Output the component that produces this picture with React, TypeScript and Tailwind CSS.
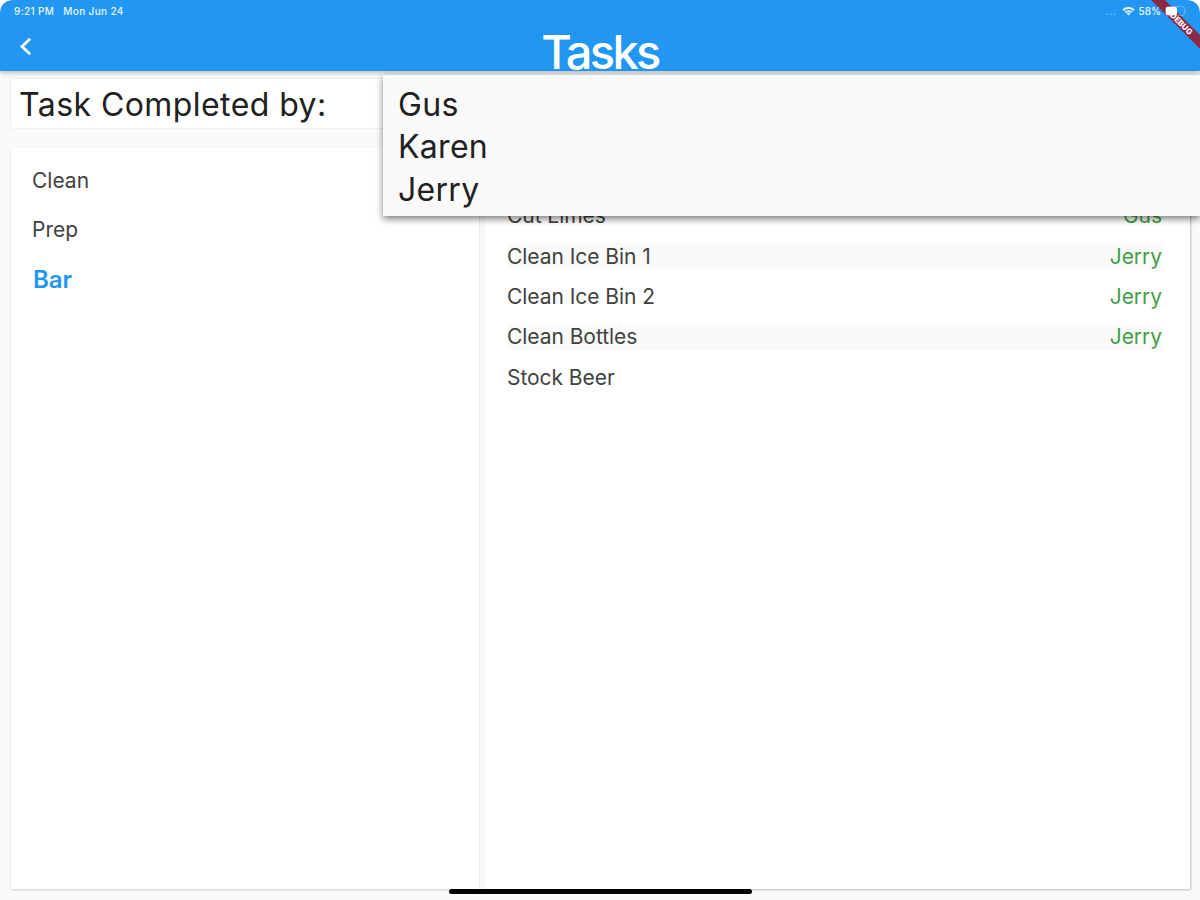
interface Task {
  name: string;
  completedBy?: string;
}

const employees = ['Gus', 'Karen', 'Jerry'];

const categories = ['Clean', 'Prep', 'Bar'];

const tasks: Task[] = [
  { name: 'Cut Limes', completedBy: 'Gus' },
  { name: 'Clean Ice Bin 1', completedBy: 'Jerry' },
  { name: 'Clean Ice Bin 2', completedBy: 'Jerry' },
  { name: 'Clean Bottles', completedBy: 'Jerry' },
  { name: 'Stock Beer' },
];

function StatusBar() {
  return (
    <div className="flex h-[22px] items-center justify-between pl-[14px] pr-[12px] text-[10px] font-medium leading-none text-white/90">
      <div className="flex gap-[9px] tracking-[0.35px]">
        <span>9:21 PM</span>
        <span>Mon Jun 24</span>
      </div>
      <div className="flex items-center">
        <span className="mr-[5px] tracking-[0.5px] text-white/40">...</span>
        <svg className="mr-[4px] h-[9px] w-[13px]" viewBox="0 0 13 9" fill="none" stroke="currentColor">
          <path d="M1 3.2a8 8 0 0 1 11 0" strokeWidth="2" />
          <path d="M3.2 5.4a4.8 4.8 0 0 1 6.6 0" strokeWidth="1.8" />
          <path d="M4.5 6.4 6.5 8.6l2-2.2a3 3 0 0 0-4 0z" fill="currentColor" stroke="none" />
        </svg>
        <span className="mr-[4px]">58%</span>
        <svg className="h-[10px] w-[23px]" viewBox="0 0 23 10" fill="none">
          <rect x="0.5" y="0.5" width="19" height="9" rx="2.5" stroke="white" strokeOpacity="0.3" />
          <rect x="1" y="1" width="11" height="8" rx="1.5" fill="white" />
          <path d="M21 3.5v3" stroke="white" strokeOpacity="0.3" />
        </svg>
      </div>
    </div>
  );
}

function Header() {
  return (
    <header className="relative z-10 h-[71px] shrink-0 bg-[#2196f3] shadow-[0_2px_5px_rgba(0,0,0,0.25)]">
      <div className="relative z-30">
        <StatusBar />
      </div>
      <div className="grid h-[49px] grid-cols-[1fr_auto_1fr]">
        <svg className="ml-[19px] mt-[15px] h-[19px] w-[14px]" viewBox="0 0 14 19" fill="none">
          <path d="M11.2 1.8 3 9.5l8.2 7.7" stroke="white" strokeWidth="2.8" />
        </svg>
        <h1 className="h-[49px] text-[47px] font-medium leading-[59px] tracking-[-2.7px] text-white">Tasks</h1>
      </div>
      <DebugRibbon />
    </header>
  );
}

// Sits under the battery icon, the label follows the band's slope
function DebugRibbon() {
  return (
    <svg className="absolute right-0 top-0 z-20 h-[50px] w-[50px]" viewBox="0 0 50 50">
      <path d="M1 0h14l35 35v14z" fill="#8b2a45" />
      <text
        x="31.5"
        y="26.5"
        transform="rotate(45 31.5 23.5)"
        textAnchor="middle"
        fill="white"
        fontSize="8"
        fontWeight="800"
      >
        DEBUG
      </text>
    </svg>
  );
}

// Rounded screen corners and the home indicator
function ScreenOverlay() {
  return (
    <div className="pointer-events-none absolute inset-0 z-30 overflow-hidden">
      <svg className="absolute left-0 top-0 h-[14px] w-[14px]" viewBox="0 0 14 14">
        <path d="M0 0h14C5 0 0 5 0 14z" fill="white" />
      </svg>
      <svg className="absolute right-0 top-0 h-[14px] w-[14px]" viewBox="0 0 14 14">
        <path d="M14 0H0c9 0 14 5 14 14z" fill="white" />
      </svg>
      <div className="absolute bottom-[6px] left-[449px] h-[5px] w-[303px] rounded-full bg-black" />
    </div>
  );
}

function EmployeeMenu() {
  return (
    <ul className="absolute left-[383px] right-0 top-[75px] z-20 h-[141px] bg-[#fafafa] pl-[15px] pt-[8px] shadow-[0_3px_7px_rgba(0,0,0,0.5)]">
      {employees.map((name) => (
        <li key={name} className="h-[42.3px] text-[32px] leading-[44px] tracking-[0.3px] text-[#212121]">
          {name}
        </li>
      ))}
    </ul>
  );
}

export default function App() {
  return (
    <div className="relative flex h-[900px] w-[1200px] flex-col overflow-hidden bg-[#fafafa] font-['Inter',sans-serif]">
      <Header />

      <main className="flex flex-1 flex-col pb-[11px] pl-[11px] pr-[10px] pt-[8px]">
        <div className="h-[49px] shrink-0 rounded-[3px] bg-white pl-[8px] text-[32px] leading-[51px] tracking-[0.43px] text-[#212121] shadow-[0_0_2px_rgba(0,0,0,0.15)]">
          Task Completed by:
        </div>

        <div className="mt-[20px] flex flex-1 gap-[6px]">
          <ul className="w-[468px] bg-white pl-[21px] pt-[8px] shadow-[0_1px_2px_rgba(0,0,0,0.18)]">
            {categories.map((category) => (
              <li
                key={category}
                className={
                  category === 'Bar'
                    ? 'h-[49.3px] pl-px text-[24px] font-semibold leading-[49px] text-[#2196f3]'
                    : 'h-[49.3px] text-[21px] leading-[49px] text-[#424242]'
                }
              >
                {category}
              </li>
            ))}
          </ul>

          <ul className="flex-1 bg-white pl-[22px] pr-[28px] pt-[48px] shadow-[1px_1px_2px_rgba(0,0,0,0.25)]">
            {tasks.map((task, index) => (
              <li key={task.name} className="flex h-[40.3px] items-center">
                <div
                  className={`flex h-[26px] flex-1 items-center justify-between text-[21px] tracking-[-0.05px] text-[#424242] ${
                    index % 2 === 1 ? 'bg-[#fafafa]' : ''
                  }`}
                >
                  <span>{task.name}</span>
                  <span className="text-[#43a047]">{task.completedBy}</span>
                </div>
              </li>
            ))}
          </ul>
        </div>
      </main>

      <EmployeeMenu />
      <ScreenOverlay />
    </div>
  );
}
